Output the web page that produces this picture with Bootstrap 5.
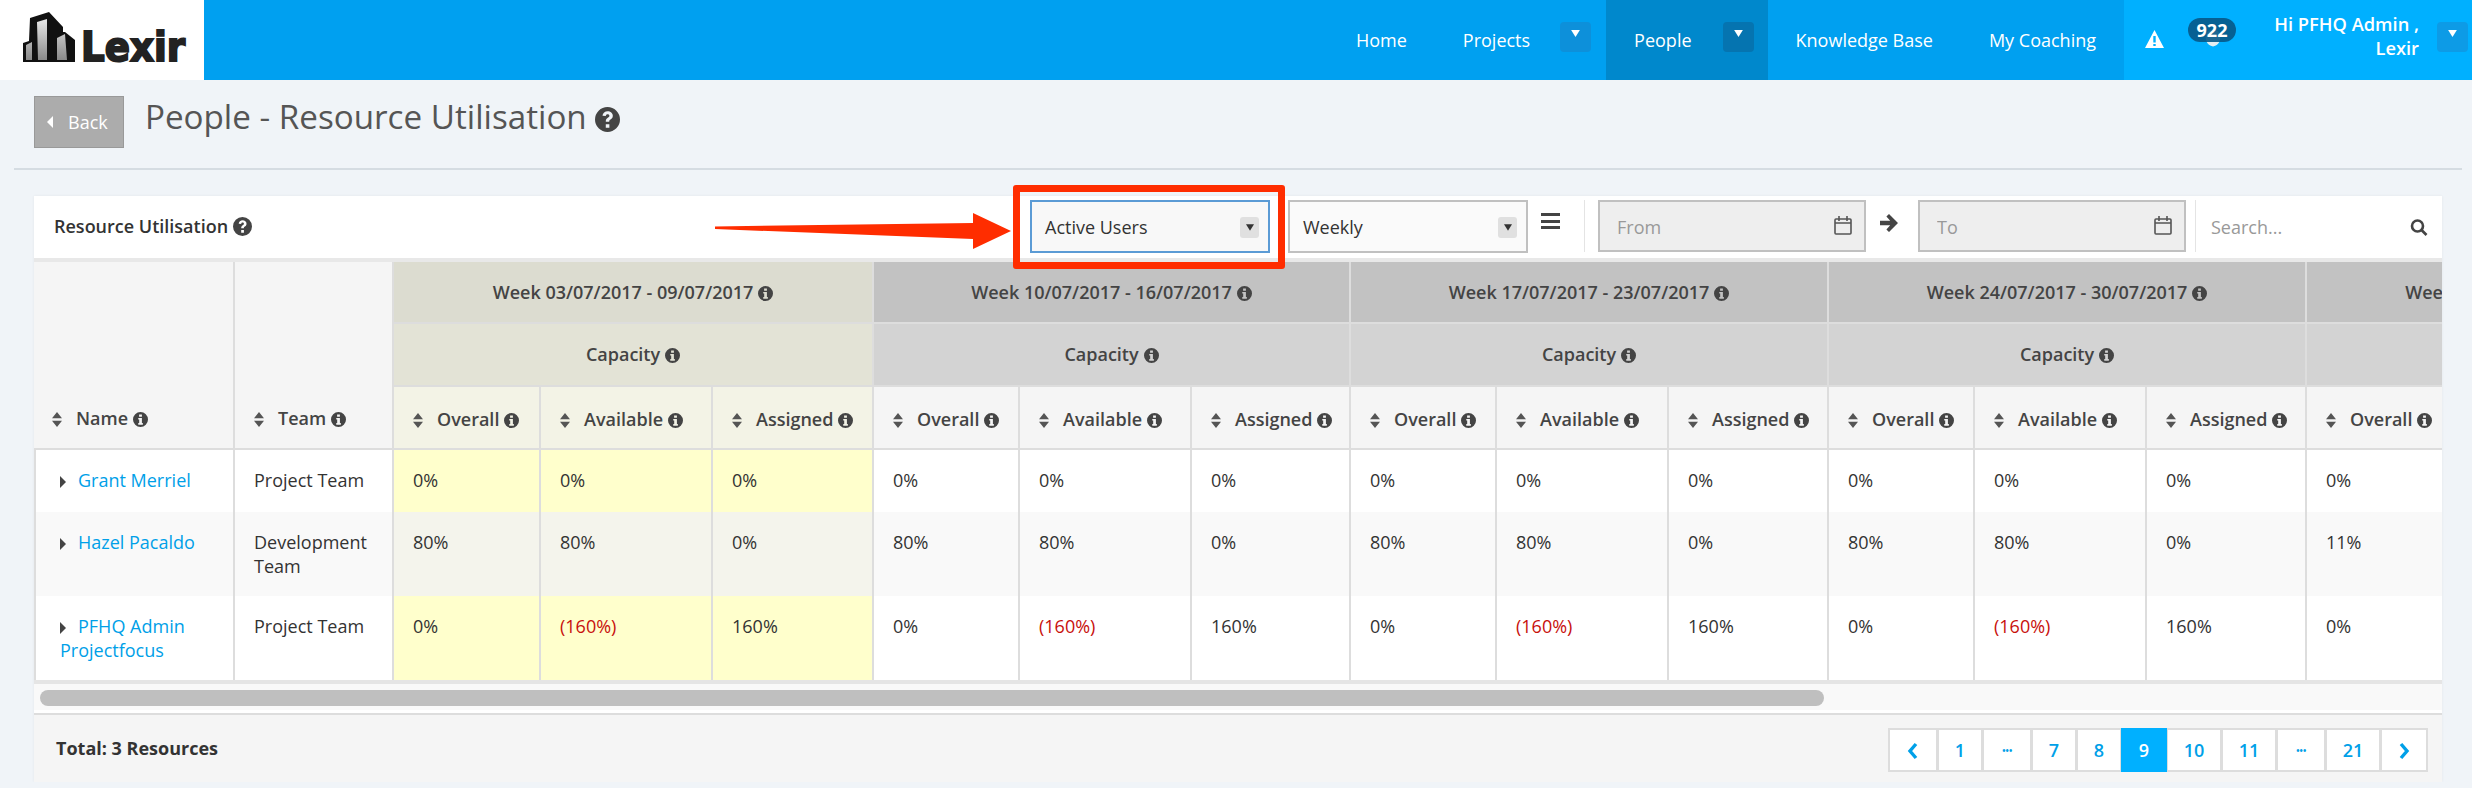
<!DOCTYPE html>
<html lang="en"><head><meta charset="utf-8"><title>People - Resource Utilisation</title>
<link href="https://cdn.jsdelivr.net/npm/bootstrap@5.3.0/dist/css/bootstrap.min.css" rel="stylesheet">
<script src="https://cdn.jsdelivr.net/npm/bootstrap@5.3.0/dist/js/bootstrap.bundle.min.js"></script>
<style>
body{background:#f0f4f8;font-family:"Open Sans",sans-serif;font-size:18px;color:#333;overflow:hidden}
.ic{fill:currentColor;flex:none}
.ic-i{width:15px;height:15px;vertical-align:-2px;margin-left:5px;color:#444}
.ic-q{width:19px;height:19px;vertical-align:-3px;color:#444}
.ic-s{width:10px;height:15px;vertical-align:-2px;margin-right:14px;color:#555}
.ic-r{width:6px;height:12px;vertical-align:-1px;margin-right:12px;color:#444}
.topbar{height:80px;background:#00a0f0}
.logo-box{width:204px;background:#fff}
.nav-lk{color:#fff;text-decoration:none;line-height:80px;font-weight:400;font-size:18px;padding:0 28px}
.nav-lk:hover{color:#fff}
.nav-grp{padding-right:15px}
.nav-grp .nav-lk{padding-right:30px}
.nav-on{background:#0088cc;padding-right:14px}
.nav-on .nav-lk{padding-right:31px}
.car{width:31px;height:30px;border-radius:4px;background:#0d90da;margin-top:22px;padding-top:8px;text-align:center;line-height:0}
.car svg{width:9px;height:7px;fill:#fff}
.nav-on .car{background:#0574b0}
.nav-side{background:#00b0ff;width:348px;padding-left:21px}
.warn{width:19px;height:18px;margin-top:30px;fill:#fff}
.bell-wrap{position:relative;width:48px;height:80px;margin-left:24px}
.bell{position:absolute;left:17px;top:28px;width:16px;height:20px;fill:#e4eef2}
.bell-b{position:absolute;left:0;top:18px;width:48px;height:24px;border-radius:12px;background:rgba(7,88,135,.9);color:#fff;font-weight:700;font-size:18px;line-height:24px;text-align:center}
.hi{width:158px;margin-left:25px;padding-top:12px;line-height:24px;font-weight:600;font-size:18.300px;color:#fff;text-align:right;white-space:nowrap}
.side-car{margin-left:18px;background:#0d9be6}
.head-row{padding:16px 34px 0;height:88px}
.bk{width:90px;height:52px;background:#acacac;border:1px solid #999;border-radius:0;color:#fff;font-size:18px;padding:0 0 0 12px;display:flex;align-items:center;justify-content:flex-start}
.bk svg{width:6px;height:12px;fill:#fff;margin-right:15px}
.bk:hover{background:#acacac;color:#fff}
.ttl{font-size:33.200px;font-weight:400;color:#555;margin:-1px 0 0 21px;line-height:44px}
.ttl svg{width:25px;height:25px;color:#444;vertical-align:-3px}
.rule{height:2px;background:#d5dce2;margin:0 10px 0 14px}
.sheet{margin:26px 30px 0 34px;background:#fff;position:relative;box-shadow:0 0 3px rgba(0,0,0,.06)}
.tools{height:66px;border-bottom:4px solid #e8e8e8;padding-top:4px;padding-left:20px}
.tools-t{font-weight:600;font-size:18px;color:#333;line-height:52px;margin-right:auto}
.pick{width:240px;height:53px;border:2px solid #c0c0c0;background:#fafafa;padding:2px 9px 0 13px;margin-right:18px;color:#333}
.pick-on{border-color:#5b9bd5;background:#f8f8f8}
.pick-c{width:19px;height:21px;background:#e0e0e0;border-radius:3px;line-height:0;text-align:center;padding-top:7px}
.pick-c svg{width:8px;height:7px;fill:#333}
.ham{width:19px;height:16px;margin:13px 24px 0 -5px;border-top:3px solid #444;border-bottom:3px solid #444}
.ham i{display:block;height:3px;background:#444;margin-top:3.5px}
.vsep{width:1px;height:52px;background:#e4e4e4}
.dbox{width:268px;height:52px;border:2px solid #c0c0c0;background:#eee;padding-right:12px;margin-left:13px}
.dbox input{border:0;background:transparent;outline:0;padding:2px 0 0 17px;font-size:18px;color:#333;flex:1;min-width:0}
.dbox input::placeholder,.srch input::placeholder{color:#999}
.dbox svg{width:18px;height:20px;fill:none;stroke:#555;stroke-width:1.6;margin-top:-2px}
.to-arr{width:18px;height:18px;margin:14px 12px 0 14px;fill:#444;flex:none}
.srch{margin-left:9px;width:247px;height:52px;border-left:1px solid #e4e4e4;padding:0 14px 0 15px}
.srch input{border:0;outline:0;font-size:18px;padding:2px 0 0;flex:1;min-width:0;background:transparent}
.srch svg{width:18px;height:17px;fill:none;stroke:#444;stroke-width:2.6;margin-top:2px}
.flag{position:absolute;left:979px;top:-11px;width:272px;height:84px;border:7px solid #ff2d00;border-radius:3px;pointer-events:none}
.pointer{position:absolute;left:681px;top:17px;width:296px;height:36px;fill:#ff2d00;pointer-events:none}
.grid-wrap{overflow:hidden}
.rtable{table-layout:fixed;border-collapse:separate;border-spacing:0;width:2752px;margin:0}
.rtable th,.rtable td{border-right:2px solid #ddd;border-bottom:0;font-size:18px;line-height:24px}
.rtable th{font-weight:600;color:#444;text-align:center;vertical-align:middle;padding:0;white-space:nowrap}
.rtable .r1 th{height:60px}.rtable .r2 th{height:63px;border-top:2px solid #ddd;padding-bottom:2px}
.rtable .r3 th{height:65px;border-top:2px solid #ddd;border-bottom:2px solid #ddd;text-align:left;padding:2px 0 0 19px;background:#f5f5f5}
.rtable .ps{background:#f5f5f5;vertical-align:bottom;text-align:left;padding:0 0 18px 18px;border-bottom:2px solid #ddd}
.rtable .ps-t{padding-left:19px}
.rtable .w0{background:#dcdcd0}.rtable .c0{background:#e3e3d6}
.rtable .r3 .s0{background:#f3f3e6}
.rtable .w1{background:#c2c2c2}.rtable .c1{background:#d3d3d3}
.rtable td{padding:18px 19px;vertical-align:top;color:#333;background:#fff}
.rtable .b1{height:62px}.rtable .b2,.rtable .b3{height:84px}
.rtable .b2 td{background:#f9f9f9}
.rtable td.yy{background:#ffc}
.rtable .b2 td.yy{background:#f4f4ec}
.rtable td.nm{padding-left:24px;padding-right:8px;border-left:2px solid #ddd}
.rtable td.neg{color:#c8100c}
.rtable a{color:#00a0e8;text-decoration:none}
.bar-zone{border-top:4px solid #e5e5e5;height:30px;background:#f9f9f9;padding:6px 0 0 6px}
.bar-th{width:1784px;height:16px;border-radius:8px;background:#bfbfbf}
.foot-zone{border-top:2px solid #ddd;margin-top:3px;height:69px;background:#f5f5f5;padding:13px 14px 0 22px}
.tot{font-weight:700;font-size:18px;line-height:40px;color:#333;margin-right:auto}
.pgr{margin:0}
.pgr .page-link{height:44px;border:2px solid #ddd;border-radius:0!important;color:#00a0e8;background:#fff;font-size:18px;font-weight:600;line-height:40px;padding:0;text-align:center;margin-left:-1px}
.pgr .active .page-link{background:#00b0ff;border-color:#00b0ff;color:#fff}
.pgr svg{width:12px;height:18px;fill:none;stroke:#00a0e8;stroke-width:3.4;vertical-align:-3px}
.g1{width:50px}.g2{width:46px}.g6{width:48px}.g7{width:56px}
.pgr .dots{font-size:10px;letter-spacing:-.5px}
</style></head><body>
<svg width="0" height="0" class="d-none"><defs>
<symbol id="i" viewBox="0 0 16 16"><path fill-rule="evenodd" d="M8 0a8 8 0 1 0 0 16A8 8 0 0 0 8 0ZM6.500 2.600h3v2.400h-3ZM5.600 6.300h3.900v5.400h1v1.800H5.600v-1.800h1V8.100h-1Z"/></symbol>
<symbol id="q" viewBox="0 0 16 16"><path fill-rule="evenodd" d="M8 0a8 8 0 1 0 0 16A8 8 0 0 0 8 0ZM6.900 11h2.300v2.300H6.900ZM4.800 5.600C4.900 3.800 6.400 2.700 8.100 2.700c1.800 0 3.300 1.200 3.300 2.900 0 1.400-.8 2-1.700 2.600-.4.3-.6.6-.6 1.300H6.900c0-1.400.4-2.100 1.300-2.600.6-.4 1-.7 1-1.300 0-.5-.5-.9-1.100-.9-.7 0-1.100.4-1.200 1.100Z"/></symbol>
<symbol id="s" viewBox="0 0 10 15"><path d="M5 0l5 6.200H0ZM0 8.800h10L5 15Z"/></symbol>
<symbol id="r" viewBox="0 0 6 12"><path d="M0 0l6 6-6 6Z"/></symbol>
<symbol id="l" viewBox="0 0 6 12"><path d="M6 0L0 6l6 6Z"/></symbol>
<symbol id="d" viewBox="0 0 10 8"><path d="M0 0h10L5 8Z"/></symbol>
<symbol id="c" viewBox="0 0 18 20"><rect x="1" y="4" width="16" height="15" rx="1"/><path d="M1 8h16M5 1v5M13 1v5"/></symbol>
</defs></svg>

<nav class="topbar d-flex">
  <div class="logo-box">
    <svg width="204" height="80" viewBox="0 0 204 80" role="img" aria-label="Lexir logo"><defs><linearGradient id="lg" x1="0" x2="0" y1="0" y2="1"><stop offset="0" stop-color="#e8e8e8"/><stop offset="1" stop-color="#8a8a8a"/></linearGradient></defs>
      <path fill="#111" d="M30 18L49 12 63 27V32L65 32 75 40V62H23V43L29 41Z"/>
      <path fill="url(#lg)" d="M37 22L47 19V60H38ZM57 38L65 34 67 60H57ZM26 45L32 42V60H26Z"/>
      <text x="81" y="61" font-family="DejaVu Sans" font-weight="700" font-size="41" fill="#222" stroke="#222" stroke-width="2" textLength="104" lengthAdjust="spacingAndGlyphs">Lexir</text></svg>
  </div>
  <div class="d-flex ms-auto">
    <a class="nav-lk" href="#">Home</a>
    <div class="d-flex nav-grp"><a class="nav-lk" href="#">Projects</a><div class="car"><svg><use href="#d"/></svg></div></div>
    <div class="d-flex nav-on"><a class="nav-lk" href="#">People</a><div class="car"><svg><use href="#d"/></svg></div></div>
    <a class="nav-lk" href="#">Knowledge Base</a>
    <a class="nav-lk" href="#">My Coaching</a>
    <div class="nav-side d-flex">
      <svg class="warn" viewBox="0 0 19 18" aria-hidden="true"><path fill-rule="evenodd" d="M9.500 0L19 18H0ZM8.300 6v6.500h2.400V6ZM8.300 14v2h2.400v-2Z"/></svg>
      <div class="bell-wrap"><svg class="bell" viewBox="0 0 20 21"><path d="M10 0c5 0 9 4 9 10s-4 11-9 11-9-5-9-11 4-10 9-10Z"/></svg><span class="bell-b">922</span></div>
      <div class="hi">Hi PFHQ Admin ,<br>Lexir</div>
      <div class="car side-car"><svg><use href="#d"/></svg></div>
    </div>
  </div>
</nav>

<div class="head-row d-flex align-items-start">
  <a class="btn bk" href="#"><svg><use href="#l"/></svg>Back</a>
  <h1 class="ttl">People - Resource Utilisation <svg class="ic"><use href="#q"/></svg></h1>
</div>
<div class="rule"></div>

<div class="sheet">
  <div class="tools d-flex align-items-start">
    <div class="tools-t">Resource Utilisation <svg class="ic ic-q"><use href="#q"/></svg></div>
    <div class="pick pick-on d-flex align-items-center justify-content-between"><span>Active Users</span><span class="pick-c"><svg><use href="#d"/></svg></span></div>
    <div class="pick d-flex align-items-center justify-content-between"><span>Weekly</span><span class="pick-c"><svg><use href="#d"/></svg></span></div>
    <div class="ham"><i></i></div>
    <div class="vsep"></div>
    <div class="dbox d-flex align-items-center"><input placeholder="From" aria-label="From"><svg><use href="#c"/></svg></div>
    <svg class="to-arr" viewBox="0 0 18 18"><path d="M9 0l9 9-9 9-2.600-2.600L10.200 11.200H0V6.800h10.200L6.400 2.600Z"/></svg>
    <div class="dbox ms-2 d-flex align-items-center"><input placeholder="To" aria-label="To"><svg><use href="#c"/></svg></div>
    <div class="srch d-flex align-items-center"><input placeholder="Search..." aria-label="Search"><svg viewBox="0 0 18 17"><circle cx="7.500" cy="7" r="5.500"/><path d="M11.500 11l5 5"/></svg></div>
  </div>
  <div class="flag"></div>
  <svg class="pointer" viewBox="0 0 296 36"><path d="M0 13.500L258 10 258 0 296 18 258 36 258 26 0 16Z"/></svg>
  <div class="grid-wrap">
    <table class="table rtable">
      <colgroup><col style="width:201px"><col style="width:159px"><col style="width:147px"><col style="width:172px"><col style="width:161px"><col style="width:146px"><col style="width:172px"><col style="width:159px"><col style="width:146px"><col style="width:172px"><col style="width:160px"><col style="width:146px"><col style="width:172px"><col style="width:160px"><col style="width:147px"><col style="width:172px"><col style="width:160px"></colgroup>
      <thead>
        <tr class="r1">
          <th rowspan="3" class="ps"><svg class="ic ic-s"><use href="#s"/></svg>Name<svg class="ic ic-i"><use href="#i"/></svg></th>
          <th rowspan="3" class="ps ps-t"><svg class="ic ic-s"><use href="#s"/></svg>Team<svg class="ic ic-i"><use href="#i"/></svg></th>
          <th colspan="3" class="w0">Week 03/07/2017 - 09/07/2017<svg class="ic ic-i"><use href="#i"/></svg></th>
          <th colspan="3" class="w1">Week 10/07/2017 - 16/07/2017<svg class="ic ic-i"><use href="#i"/></svg></th>
          <th colspan="3" class="w1">Week 17/07/2017 - 23/07/2017<svg class="ic ic-i"><use href="#i"/></svg></th>
          <th colspan="3" class="w1">Week 24/07/2017 - 30/07/2017<svg class="ic ic-i"><use href="#i"/></svg></th>
          <th colspan="3" class="w1">Week 31/07/2017 - 06/08/2017<svg class="ic ic-i"><use href="#i"/></svg></th>
        </tr>
        <tr class="r2">
          <th colspan="3" class="c0">Capacity<svg class="ic ic-i"><use href="#i"/></svg></th>
          <th colspan="3" class="c1">Capacity<svg class="ic ic-i"><use href="#i"/></svg></th>
          <th colspan="3" class="c1">Capacity<svg class="ic ic-i"><use href="#i"/></svg></th>
          <th colspan="3" class="c1">Capacity<svg class="ic ic-i"><use href="#i"/></svg></th>
          <th colspan="3" class="c1">Capacity<svg class="ic ic-i"><use href="#i"/></svg></th>
        </tr>
        <tr class="r3">
          <th class="s0"><svg class="ic ic-s"><use href="#s"/></svg>Overall<svg class="ic ic-i"><use href="#i"/></svg></th><th class="s0"><svg class="ic ic-s"><use href="#s"/></svg>Available<svg class="ic ic-i"><use href="#i"/></svg></th><th class="s0"><svg class="ic ic-s"><use href="#s"/></svg>Assigned<svg class="ic ic-i"><use href="#i"/></svg></th>
          <th><svg class="ic ic-s"><use href="#s"/></svg>Overall<svg class="ic ic-i"><use href="#i"/></svg></th><th><svg class="ic ic-s"><use href="#s"/></svg>Available<svg class="ic ic-i"><use href="#i"/></svg></th><th><svg class="ic ic-s"><use href="#s"/></svg>Assigned<svg class="ic ic-i"><use href="#i"/></svg></th>
          <th><svg class="ic ic-s"><use href="#s"/></svg>Overall<svg class="ic ic-i"><use href="#i"/></svg></th><th><svg class="ic ic-s"><use href="#s"/></svg>Available<svg class="ic ic-i"><use href="#i"/></svg></th><th><svg class="ic ic-s"><use href="#s"/></svg>Assigned<svg class="ic ic-i"><use href="#i"/></svg></th>
          <th><svg class="ic ic-s"><use href="#s"/></svg>Overall<svg class="ic ic-i"><use href="#i"/></svg></th><th><svg class="ic ic-s"><use href="#s"/></svg>Available<svg class="ic ic-i"><use href="#i"/></svg></th><th><svg class="ic ic-s"><use href="#s"/></svg>Assigned<svg class="ic ic-i"><use href="#i"/></svg></th>
          <th><svg class="ic ic-s"><use href="#s"/></svg>Overall<svg class="ic ic-i"><use href="#i"/></svg></th><th><svg class="ic ic-s"><use href="#s"/></svg>Available<svg class="ic ic-i"><use href="#i"/></svg></th><th><svg class="ic ic-s"><use href="#s"/></svg>Assigned<svg class="ic ic-i"><use href="#i"/></svg></th>
        </tr>
      </thead>
      <tbody>
        <tr class="b1"><td class="nm"><svg class="ic ic-r"><use href="#r"/></svg><a href="#">Grant Merriel</a></td><td>Project Team</td><td class="yy">0%</td><td class="yy">0%</td><td class="yy">0%</td><td>0%</td><td>0%</td><td>0%</td><td>0%</td><td>0%</td><td>0%</td><td>0%</td><td>0%</td><td>0%</td><td>0%</td><td>0%</td><td>0%</td></tr>
        <tr class="b2"><td class="nm"><svg class="ic ic-r"><use href="#r"/></svg><a href="#">Hazel Pacaldo</a></td><td>Development Team</td><td class="yy">80%</td><td class="yy">80%</td><td class="yy">0%</td><td>80%</td><td>80%</td><td>0%</td><td>80%</td><td>80%</td><td>0%</td><td>80%</td><td>80%</td><td>0%</td><td>11%</td><td>80%</td><td>0%</td></tr>
        <tr class="b3"><td class="nm"><svg class="ic ic-r"><use href="#r"/></svg><a href="#">PFHQ Admin Projectfocus</a></td><td>Project Team</td><td class="yy">0%</td><td class="yy neg">(160%)</td><td class="yy">160%</td><td>0%</td><td class="neg">(160%)</td><td>160%</td><td>0%</td><td class="neg">(160%)</td><td>160%</td><td>0%</td><td class="neg">(160%)</td><td>160%</td><td>0%</td><td class="neg">(160%)</td><td>160%</td></tr>
      </tbody>
    </table>
  </div>
  <div class="bar-zone"><div class="bar-th"></div></div>
  <div class="foot-zone d-flex align-items-start">
    <div class="tot">Total: 3 Resources</div>
    <ul class="pagination pgr">
      <li class="page-item"><a class="page-link g1" href="#"><svg viewBox="0 0 12 18"><path d="M9 2L3 9l6 7"/></svg></a></li>
      <li class="page-item"><a class="page-link g2" href="#">1</a></li>
      <li class="page-item"><a class="page-link g1 dots" href="#">•••</a></li>
      <li class="page-item"><a class="page-link g2" href="#">7</a></li>
      <li class="page-item"><a class="page-link g2" href="#">8</a></li>
      <li class="page-item active"><a class="page-link g2" href="#">9</a></li>
      <li class="page-item"><a class="page-link g7" href="#">10</a></li>
      <li class="page-item"><a class="page-link g7" href="#">11</a></li>
      <li class="page-item"><a class="page-link g1 dots" href="#">•••</a></li>
      <li class="page-item"><a class="page-link g7" href="#">21</a></li>
      <li class="page-item"><a class="page-link g6" href="#"><svg viewBox="0 0 12 18"><path d="M3 2l6 7-6 7"/></svg></a></li>
    </ul>
  </div>
</div>
</body></html>
